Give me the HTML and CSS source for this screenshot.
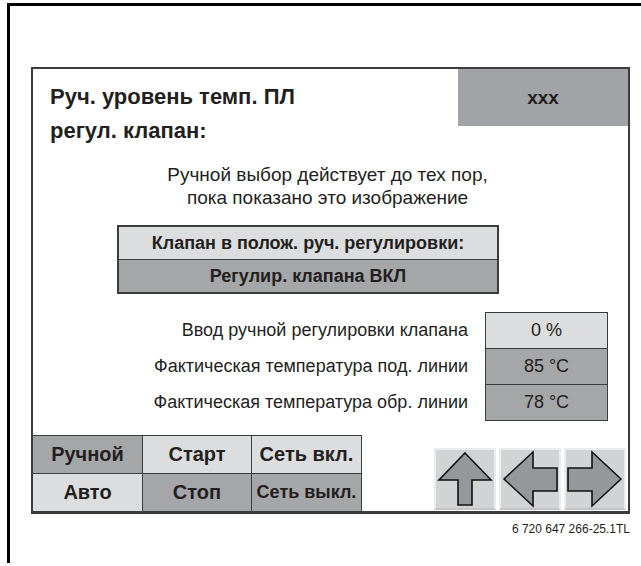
FILE: index.html
```html
<!DOCTYPE html>
<html lang="ru">
<head>
  <meta charset="UTF-8" />
  <meta name="viewport" content="width=device-width, initial-scale=1" />
  <title>Ручной уровень температуры</title>
  <link rel="stylesheet" href="styles.css">
</head>
<body>

<div class="frame">
  <div class="panel">
    <div class="head">
      <h1 class="title">Руч. уровень темп. ПЛ<br>регул. клапан:</h1>
      <div class="tag">xxx</div>
    </div>

    <p class="note">Ручной выбор действует до тех пор,<br>пока показано это изображение</p>

    <div class="state">
      <div class="state-row light">Клапан в полож. руч. регулировки:</div>
      <div class="state-row dark">Регулир. клапана ВКЛ</div>
    </div>

    <div class="readings">
      <div class="labels">
        <div class="label">Ввод ручной регулировки клапана</div>
        <div class="label">Фактическая температура под. линии</div>
        <div class="label">Фактическая температура обр. линии</div>
      </div>
      <div class="values">
        <div class="value light">0 %</div>
        <div class="value dark">85 °C</div>
        <div class="value dark">78 °C</div>
      </div>
    </div>

    <div class="controls">
      <div class="modes">
        <div class="mode dark">Ручной</div>
        <div class="mode light">Старт</div>
        <div class="mode light">Сеть вкл.</div>
        <div class="mode light">Авто</div>
        <div class="mode dark">Стоп</div>
        <div class="mode dark small">Сеть выкл.</div>
      </div>

      <div class="arrows">
        <div class="arrow-btn">
          <svg viewBox="0 0 58 58" width="58" height="58">
            <polygon points="29,3 55,30 36,30 36,55 22,55 22,30 3,30" />
          </svg>
        </div>
        <div class="arrow-btn">
          <svg viewBox="0 0 58 58" width="58" height="58">
            <polygon points="3,29 32,2 32,18 56,18 56,41 32,41 32,56" />
          </svg>
        </div>
        <div class="arrow-btn">
          <svg viewBox="0 0 58 58" width="58" height="58">
            <polygon points="55,29 26,2 26,18 2,18 2,41 26,41 26,56" />
          </svg>
        </div>
      </div>
    </div>
  </div>

  <div class="code">6 720 647 266-25.1TL</div>
</div>

</body>
</html>
```

FILE: styles.css
```css
body {
  margin: 0;
  font-family: 'Liberation Sans', Arial, sans-serif;
  background: #fff;
  color: #231f20;
}
.frame {
  margin: 3px 0 0 7px;
  height: 560px;
  border-top: 3px solid #000;
  border-left: 3px solid #000;
  padding: 61px 0 0 21px;
  box-sizing: border-box;
}
.panel {
  width: 599px;
  height: 447px;
  box-sizing: border-box;
  border: 2px solid #3c3c3c;
  border-bottom-width: 3px;
  display: flex;
  flex-direction: column;
}
.head {
  display: flex;
  justify-content: space-between;
  align-items: flex-start;
}
.title {
  margin: 0;
  padding: 11px 0 0 17px;
  font-size: 22px;
  line-height: 34px;
  font-weight: bold;
}
.tag {
  width: 170px;
  height: 57px;
  background: #a2a3a6;
  font-weight: bold;
  font-size: 19px;
  display: flex;
  align-items: center;
  justify-content: center;
}
.note {
  margin: 15px 6px 0 0;
  text-align: center;
  font-size: 19px;
  line-height: 23px;
}
.state {
  width: 378px;
  margin: 16px 0 0 84px;
  border: 2px solid #3c3c3c;
}
.state-row {
  height: 32px;
  display: flex;
  align-items: center;
  justify-content: center;
  font-weight: bold;
  font-size: 18px;
}
.state-row + .state-row {
  border-top: 1px solid #3c3c3c;
}
.light {
  background: #dcdddf;
}
.dark {
  background: #a5a6a8;
}
.readings {
  display: flex;
  justify-content: flex-end;
  gap: 17px;
  margin: 18px 20px 0 0;
}
.labels {
  text-align: right;
  font-size: 18px;
}
.label {
  height: 36px;
  line-height: 36px;
}
.values {
  width: 121px;
  border: 1px solid #3c3c3c;
}
.value {
  height: 35px;
  display: flex;
  align-items: center;
  justify-content: center;
  font-size: 18px;
}
.value + .value {
  border-top: 1px solid #3c3c3c;
}
.controls {
  margin-top: auto;
  display: flex;
  justify-content: space-between;
  align-items: flex-end;
}
.modes {
  display: grid;
  grid-template-columns: 110px 109px 110px;
  border-top: 1px solid #3c3c3c;
}
.mode {
  height: 37px;
  display: flex;
  align-items: center;
  justify-content: center;
  font-weight: bold;
  font-size: 20px;
  border-right: 1px solid #3c3c3c;
}
.mode:nth-child(-n+3) {
  border-bottom: 1px solid #3c3c3c;
}
.mode.small {
  font-size: 18px;
}
.arrows {
  display: flex;
  gap: 3px;
  margin: 0 2px 1px 0;
}
.arrow-btn {
  width: 62px;
  height: 62px;
  box-sizing: border-box;
  background: #d2d3d5;
  border: 2px solid #ececec;
  border-bottom-color: #c4c4c4;
  display: flex;
  align-items: center;
  justify-content: center;
}
.arrow-btn svg {
  display: block;
}
.arrow-btn polygon {
  fill: #96979a;
  stroke: #111;
  stroke-width: 1.6;
  stroke-linejoin: miter;
}
.code {
  width: 599px;
  text-align: right;
  font-size: 12px;
  margin-top: 8px;
}
```
